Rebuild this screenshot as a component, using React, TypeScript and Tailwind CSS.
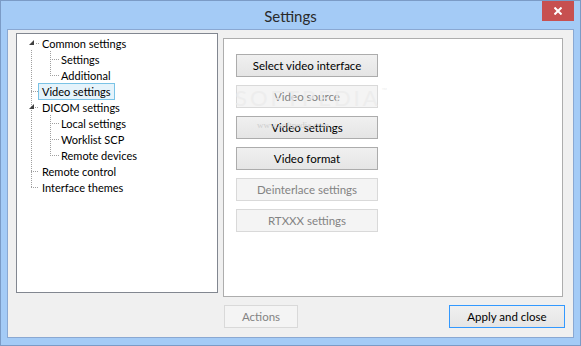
import React from "react";

const font = { fontFamily: "Lato, 'Liberation Sans', sans-serif" };

type Node = { label: string; level: 0 | 1; selected?: boolean };

const nodes: Node[] = [
  { label: "Common settings", level: 0 },
  { label: "Settings", level: 1 },
  { label: "Additional", level: 1 },
  { label: "Video settings", level: 0, selected: true },
  { label: "DICOM settings", level: 0 },
  { label: "Local settings", level: 1 },
  { label: "Worklist SCP", level: 1 },
  { label: "Remote devices", level: 1 },
  { label: "Remote control", level: 0 },
  { label: "Interface themes", level: 0 },
];

const panelButtons = [
  { label: "Select video interface", enabled: true },
  { label: "Video source", enabled: false },
  { label: "Video settings", enabled: true },
  { label: "Video format", enabled: true },
  { label: "Deinterlace settings", enabled: false },
  { label: "RTXXX settings", enabled: false },
];

function WinButton({
  label,
  enabled = true,
  isDefault = false,
  className = "",
}: {
  label: string;
  enabled?: boolean;
  isDefault?: boolean;
  className?: string;
}) {
  if (!enabled) {
    return (
      <div
        className={`flex items-center justify-center h-[23px] border border-[#d9d9d9] bg-[#f4f4f4] text-[11.5px] text-[#838383] ${className}`}
      >
        {label}
      </div>
    );
  }
  return (
    <div
      className={`flex items-center justify-center h-[23px] border ${
        isDefault ? "border-[#3399ff]" : "border-[#acacac]"
      } bg-gradient-to-b from-[#f0f0f0] to-[#e5e5e5] text-[11.5px] text-black ${className}`}
    >
      {label}
    </div>
  );
}

function TreeLines() {
  const dot = { stroke: "#a0a0a0", strokeWidth: 1, strokeDasharray: "1 1" };
  return (
    <svg className="absolute left-0 top-0 pointer-events-none" width="200" height="258">
      {/* level 0 trunk */}
      <line x1="14.5" y1="16" x2="14.5" y2="153" {...dot} />
      {[57, 73, 137, 153].map((y) => (
        <line key={y} x1="14" y1={y + 0.5} x2="22" y2={y + 0.5} {...dot} />
      ))}
      <line x1="19" y1="9.5" x2="23" y2="9.5" {...dot} />
      {/* children trunks */}
      <line x1="33.5" y1="17" x2="33.5" y2="41" {...dot} />
      <line x1="33.5" y1="81" x2="33.5" y2="121" {...dot} />
      {[25, 41, 89, 105, 121].map((y) => (
        <line key={y} x1="33" y1={y + 0.5} x2="42" y2={y + 0.5} {...dot} />
      ))}
      {/* expanded glyphs */}
      <polygon points="17,6 17,11 12,11" fill="#404040" />
      <polygon points="17,70 17,75 12,75" fill="#404040" />
    </svg>
  );
}

export default function App() {
  return (
    <div
      className="w-[581px] h-[346px] bg-[#a4cbf6] border border-[#7b9bc6] flex flex-col overflow-hidden"
      style={font}
    >
      {/* title bar */}
      <div className="relative h-[28px] shrink-0 flex items-center justify-center">
        <span className="text-[15px] text-[#2a2a2a] mt-[2px]">Settings</span>
        <div className="absolute top-0 right-[6px] w-[32px] h-[20px] bg-[#c75050] flex items-center justify-center">
          <svg width="8" height="8" viewBox="0 0 8 8">
            <path d="M0.5 0.5 L7.5 7.5 M7.5 0.5 L0.5 7.5" stroke="white" strokeWidth="2" />
          </svg>
        </div>
      </div>

      {/* client area */}
      <div className="flex-1 mx-[6px] mb-[7px] border border-[#8aa8d2] bg-[#f0f0f0] flex flex-col">
        <div className="flex items-start">
          {/* tree */}
          <div className="relative ml-[8px] mt-[3px] w-[202px] h-[260px] border border-[#828790] bg-white pt-[1px]">
            <TreeLines />
            {nodes.map((n) => (
              <div key={n.label} className="h-[16px] flex items-center">
                <div className={n.level === 0 ? "w-[21px] shrink-0" : "w-[40px] shrink-0"} />
                <span
                  className={`text-[11px] leading-[14px] pt-[1px] px-[3px] border ${
                    n.selected ? "border-[#7ac3e6] bg-[#e5f3fb]" : "border-transparent"
                  } text-black whitespace-nowrap`}
                >
                  {n.label}
                </span>
              </div>
            ))}
          </div>

          {/* panel */}
          <div className="relative ml-[5px] mt-[8px] w-[340px] h-[259px] border border-[#adadad] bg-white pl-[12px] pt-[15px] flex flex-col gap-[8px]">
            {panelButtons.map((b) => (
              <WinButton key={b.label} label={b.label} enabled={b.enabled} className="w-[142px]" />
            ))}
            <div className="absolute left-[11px] top-[48px] pointer-events-none text-[22px] tracking-[3px] text-[#ececec] leading-none opacity-80">
              SOFTPEDIA
              <span className="text-[7px] align-top ml-[1px] tracking-normal">™</span>
            </div>
            <div
              className="absolute left-[33px] top-[82px] pointer-events-none text-[9px] text-[#cfcfcf] leading-none"
              style={{ fontFamily: "'Liberation Serif', serif" }}
            >
              www.softpedia.com
            </div>
          </div>
        </div>

        {/* bottom buttons */}
        <div className="flex mt-[8px]">
          <WinButton label="Actions" enabled={false} className="ml-[216px] w-[74px]" />
          <WinButton label="Apply and close" isDefault className="ml-[151px] w-[116px]" />
        </div>
      </div>
    </div>
  );
}
